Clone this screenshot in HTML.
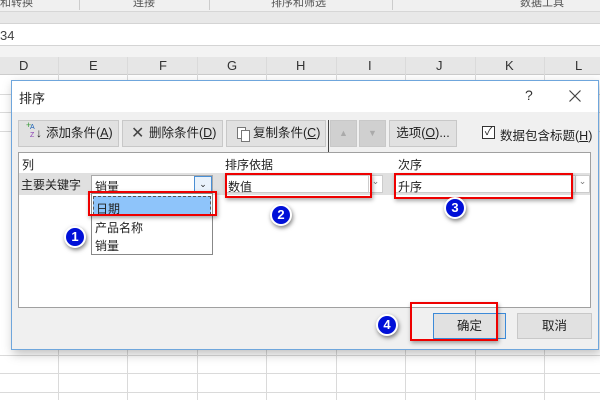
<!DOCTYPE html>
<html><head><meta charset="utf-8"><style>
*{margin:0;padding:0;box-sizing:border-box}
body{width:600px;height:400px;overflow:hidden;background:#fff;position:relative;font-family:"Liberation Sans","Noto Sans CJK SC",sans-serif;font-size:12px;color:#222}
.a{position:absolute}
.btn{position:absolute;top:120px;height:27px;background:#e1e1e1;border:1px solid #c8c8c8;line-height:25px;font-size:12.5px;color:#222}
.red{position:absolute;border:2.5px solid #e00;box-shadow:1px 2px 4px rgba(0,0,0,.35)}
.num{position:absolute;width:22px;height:22px;border-radius:50%;background:#0010d8;border:2px solid #fff;box-shadow:1px 2px 4px rgba(0,0,0,.5);color:#fff;font-weight:bold;font-size:13px;text-align:center;line-height:18px}
.vl{position:absolute;width:1px;background:#dadada}
.hl{position:absolute;height:1px;background:#dadada;left:0;width:600px}
</style></head><body>
<div class="a" style="left:0;top:0;width:600px;height:12px;background:#f0f0f0;border-bottom:1px solid #d6d6d6;overflow:hidden;font-size:11px;color:#555;line-height:6px">
<span class="a" style="left:0;top:0">和转换</span><span class="a" style="left:133px;top:0">连接</span><span class="a" style="left:271px;top:0">排序和筛选</span><span class="a" style="left:520px;top:0">数据工具</span>
<div class="a" style="left:79px;top:0;width:1px;height:10px;background:#ccc"></div><div class="a" style="left:209px;top:0;width:1px;height:10px;background:#ccc"></div><div class="a" style="left:392px;top:0;width:1px;height:10px;background:#ccc"></div></div>
<div class="a" style="left:0;top:12px;width:600px;height:11px;background:#e8e8e8"></div>
<div class="a" style="left:0;top:23px;width:600px;height:23px;background:#fff;border-top:1px solid #d4d4d4;border-bottom:1px solid #d4d4d4;font-size:13px;color:#444;padding:4px 0 0 0">34</div>
<div class="a" style="left:0;top:46px;width:600px;height:11px;background:#f3f3f3"></div>
<div class="a" style="left:0;top:57px;width:600px;height:18px;background:#e6e6e6;border-bottom:1px solid #ccc;font-size:13px;color:#333">
<span class="a" style="left:19px;top:1px">D</span><span class="a" style="left:89px;top:1px">E</span><span class="a" style="left:159px;top:1px">F</span><span class="a" style="left:227px;top:1px">G</span><span class="a" style="left:296px;top:1px">H</span><span class="a" style="left:368px;top:1px">I</span><span class="a" style="left:436px;top:1px">J</span><span class="a" style="left:505px;top:1px">K</span><span class="a" style="left:575px;top:1px">L</span>
</div>
<div class="vl" style="left:58px;top:57px;height:343px"></div><div class="vl" style="left:127px;top:57px;height:343px"></div><div class="vl" style="left:197px;top:57px;height:343px"></div><div class="vl" style="left:266px;top:57px;height:343px"></div><div class="vl" style="left:336px;top:57px;height:343px"></div><div class="vl" style="left:405px;top:57px;height:343px"></div><div class="vl" style="left:475px;top:57px;height:343px"></div><div class="vl" style="left:544px;top:57px;height:343px"></div>
<div class="hl" style="top:94px"></div><div class="hl" style="top:112px"></div><div class="hl" style="top:131px"></div><div class="hl" style="top:355px"></div><div class="hl" style="top:373px"></div><div class="hl" style="top:392px"></div>
<div class="a" style="left:11px;top:80px;width:588px;height:270px;background:#f0f0f0;border:1px solid #6fa6dc;box-shadow:2px 4px 10px rgba(0,0,0,.25)">
<div class="a" style="left:0;top:0;width:586px;height:31px;background:#fff"></div>
<span class="a" style="left:7px;top:7px;font-size:13px">排序</span>
<span class="a" style="left:513px;top:6px;font-size:14px;color:#333">?</span>
<svg class="a" style="left:557px;top:9px" width="12" height="12"><path d="M0.5 0.5L11.5 11.5M11.5 0.5L0.5 11.5" stroke="#444" stroke-width="1.2"/></svg>
</div>
<div class="btn" style="left:18px;width:101px;padding-left:27px"><span class="a" style="left:7px;top:-1px;font-size:9px;color:#3a9a3a;line-height:10px">+</span><span class="a" style="left:11px;top:3px;font-size:7px;color:#1a5fb4;line-height:8px">A</span><span class="a" style="left:11px;top:11px;font-size:7px;color:#8a3fb4;line-height:8px">Z</span><span class="a" style="left:17px;top:0;font-size:12px">↓</span>添加条件(<u>A</u>)</div>
<div class="btn" style="left:122px;width:101px;padding-left:26px"><span class="a" style="left:8px;top:0;font-size:16px;color:#444">✕</span>删除条件(<u>D</u>)</div>
<div class="btn" style="left:226px;width:100px;padding-left:26px"><span class="a" style="left:10px;top:6px;width:9px;height:12px;border:1px solid #777;background:#fff"></span><span class="a" style="left:14px;top:9px;width:9px;height:12px;border:1px solid #777;background:#fff"></span>复制条件(<u>C</u>)</div>
<div class="a" style="left:328px;top:120px;width:1px;height:43px;background:#444"></div>
<div class="btn" style="left:330px;width:27px;background:#d0d0d0;color:#aaa;text-align:center;font-size:9px">▲</div>
<div class="btn" style="left:359px;width:27px;background:#d0d0d0;color:#aaa;text-align:center;font-size:9px">▼</div>
<div class="btn" style="left:389px;width:68px;text-align:center">选项(<u>O</u>)...</div>
<div class="a" style="left:482px;top:126px;width:13px;height:13px;border:1px solid #333;background:#fff;font-size:11px;line-height:11px;text-align:center">✓</div>
<span class="a" style="left:500px;top:125px;font-size:12.5px">数据包含标题(<u>H</u>)</span>
<div class="a" style="left:18px;top:152px;width:573px;height:156px;background:#fff;border:1px solid #a0a0a0"></div>
<span class="a" style="left:22px;top:156px">列</span>
<span class="a" style="left:225px;top:156px">排序依据</span>
<span class="a" style="left:398px;top:156px">次序</span>
<div class="a" style="left:19px;top:173px;width:571px;height:22px;background:#e0e0e0"></div>
<span class="a" style="left:21px;top:176px">主要关键字</span>
<div class="a" style="left:91px;top:175px;width:122px;height:18px;background:#fff;border:1px solid #aaa;padding:2px 0 0 3px">销量<div class="a" style="right:0;top:0;width:18px;height:16px;border:1px solid #4a8fd4;background:#e9f2fb;font-size:9px;text-align:center;line-height:14px">⌄</div></div>
<div class="a" style="left:225px;top:175px;width:158px;height:18px;background:#fff;border:1px solid #ccc;padding:2px 0 0 2px">数值<div class="a" style="right:0;top:0;width:14px;height:16px;border-left:1px solid #ccc;font-size:9px;color:#777;text-align:center">⌄</div></div>
<div class="a" style="left:395px;top:175px;width:195px;height:18px;background:#fff;border:1px solid #ccc;padding:2px 0 0 2px">升序<div class="a" style="right:0;top:0;width:14px;height:16px;border-left:1px solid #ccc;font-size:9px;color:#777;text-align:center">⌄</div></div>
<div class="a" style="left:91px;top:193px;width:122px;height:62px;background:#fff;border:1px solid #888">
<div class="a" style="left:1px;top:2px;width:118px;height:19px;background:#8ec4fa;border:1px dashed #555;padding:3px 0 0 2px">日期</div>
<span class="a" style="left:3px;top:25px">产品名称</span><span class="a" style="left:3px;top:43px">销量</span></div>
<div class="red" style="left:88px;top:191px;width:129px;height:25px"></div>
<div class="red" style="left:225px;top:173px;width:147px;height:25px"></div>
<div class="red" style="left:394px;top:173px;width:179px;height:26px"></div>
<div class="num" style="left:64px;top:226px">1</div>
<div class="num" style="left:270px;top:204px">2</div>
<div class="num" style="left:444px;top:197px">3</div>
<div class="num" style="left:376px;top:314px">4</div>
<div class="a" style="left:433px;top:313px;width:73px;height:26px;background:#e1e1e1;border:1px solid #3c8ad8;text-align:center;line-height:24px;font-size:12.5px">确定</div>
<div class="a" style="left:517px;top:313px;width:75px;height:26px;background:#e1e1e1;border:1px solid #c8c8c8;text-align:center;line-height:24px;font-size:12.5px">取消</div>
<div class="red" style="left:410px;top:302px;width:88px;height:39px"></div>
</body></html>
